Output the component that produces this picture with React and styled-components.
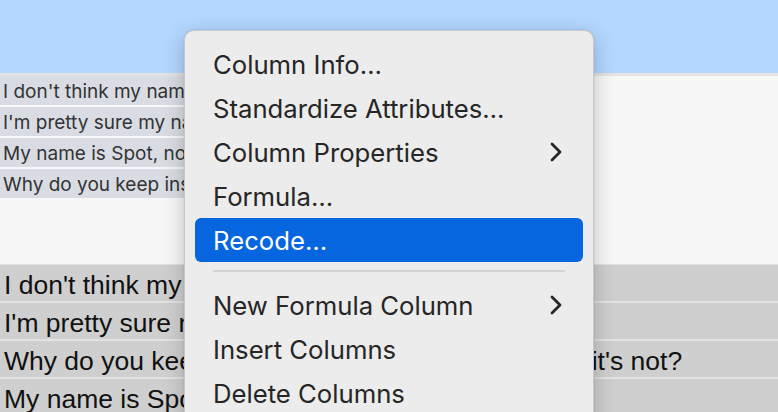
import React from "react";
import styled, { createGlobalStyle } from "styled-components";

const GlobalStyle = createGlobalStyle`
  html, body {
    margin: 0;
    padding: 0;
    width: 778px;
    height: 412px;
    overflow: hidden;
    background: #f7f7f7;
  }
`;

const Page = styled.div`
  position: relative;
  width: 778px;
  height: 412px;
  overflow: hidden;
  display: flex;
  flex-direction: column;
`;

const TopBand = styled.div`
  height: 73px;
  background: #b3d7ff;
  border-bottom: 3px solid #e3e3e3;
  flex-shrink: 0;
`;

const UpperPanel = styled.div`
  height: 188px;
  background: #f7f7f7;
  display: flex;
  flex-direction: column;
  gap: 2px;
  flex-shrink: 0;
`;

const SmallRow = styled.div`
  width: 320px;
  height: 29px;
  background: #d9dde3;
  display: flex;
  align-items: center;
  padding: 2px 0 0 3px;
  box-sizing: border-box;
  font-family: Inter, "Noto Sans", sans-serif;
  font-size: 19px;
  color: #333;
  white-space: nowrap;
  overflow: hidden;
`;

const LowerPanel = styled.div`
  flex: 1;
  background: #e3e3e3;
  display: flex;
  flex-direction: column;
  gap: 2px;
  padding-top: 1px;
`;

const BigRow = styled.div`
  height: 36px;
  box-sizing: border-box;
  padding: 4px 0 0 4px;
  background: #cfcfcf;
  display: flex;
  align-items: center;
  font-family: "Liberation Sans", Arial, sans-serif;
  font-size: 26.5px;
  color: #111;
  white-space: nowrap;
  flex-shrink: 0;
`;

const Menu = styled.div`
  position: absolute;
  left: 184px;
  top: 30px;
  width: 410px;
  height: 400px;
  box-sizing: border-box;
  padding: 11px 10px 0;
  background: #ececec;
  border: 1px solid #c9c9c9;
  border-radius: 10px;
  box-shadow: 0 6px 22px rgba(0, 0, 0, 0.22), 0 0 3px rgba(0, 0, 0, 0.08);
  font-family: Inter, "Noto Sans", sans-serif;
  font-size: 25.7px;
  color: #262626;
`;

const Item = styled.div`
  height: 44px;
  display: flex;
  align-items: center;
  justify-content: space-between;
  padding: 0 21px 0 18px;
  border-radius: 6px;
  background: ${(p) => (p.$active ? "#0566e0" : "transparent")};
  color: ${(p) => (p.$active ? "#fff" : "#262626")};
  white-space: nowrap;
`;

const Separator = styled.div`
  height: 21px;
  display: flex;
  align-items: flex-start;
  padding: 8px 18px 0;
  box-sizing: border-box;

  &::after {
    content: "";
    flex: 1;
    height: 2px;
    background: #d4d4d4;
  }
`;

const Chevron = () => (
  <svg width="12" height="20" viewBox="0 0 12 20">
    <polyline
      points="2,2 10,10 2,18"
      fill="none"
      stroke="#262626"
      strokeWidth="2.8"
      strokeLinecap="round"
      strokeLinejoin="round"
    />
  </svg>
);

const smallRows = [
  "I don't think my name is Rover",
  "I'm pretty sure my name is not Rover",
  "My name is Spot, not Rover",
  "Why do you keep insisting it's Rover",
];

const bigRows = [
  "I don't think my name is Rover",
  "I'm pretty sure my name is not Rover",
  "Why do you keep saying my name is Rover when it's not?",
  "My name is Spot, not Rover",
];

const menuItems = [
  { label: "Column Info…" },
  { label: "Standardize Attributes…" },
  { label: "Column Properties", sub: true },
  { label: "Formula…" },
  { label: "Recode…", active: true },
  { sep: true },
  { label: "New Formula Column", sub: true },
  { label: "Insert Columns" },
  { label: "Delete Columns" },
];

export default function App() {
  return (
    <>
      <GlobalStyle />
      <Page>
        <TopBand />
        <UpperPanel>
          {smallRows.map((t) => (
            <SmallRow key={t}>{t}</SmallRow>
          ))}
        </UpperPanel>
        <LowerPanel>
          {bigRows.map((t) => (
            <BigRow key={t}>{t}</BigRow>
          ))}
        </LowerPanel>

        <Menu>
          {menuItems.map((m, i) =>
            m.sep ? (
              <Separator key={i} />
            ) : (
              <Item key={i} $active={m.active}>
                <span>{m.label}</span>
                {m.sub && <Chevron />}
              </Item>
            )
          )}
        </Menu>
      </Page>
    </>
  );
}
